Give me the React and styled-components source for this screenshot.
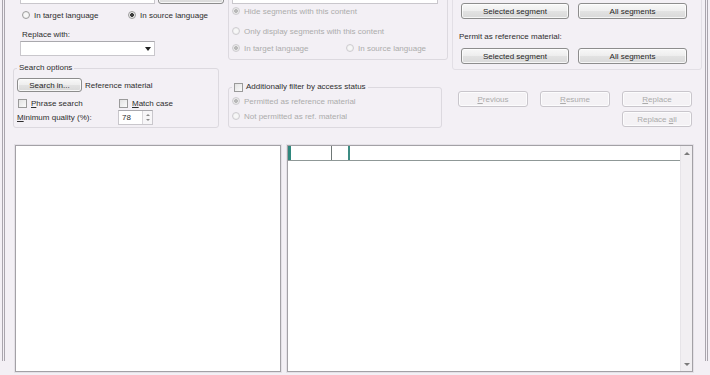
import React from 'react';
import styled, { createGlobalStyle } from 'styled-components';

const GlobalStyle = createGlobalStyle`
  html, body { margin: 0; padding: 0; background: #f3f0f5; }
  body {
    font-family: "Liberation Sans", Arial, sans-serif;
    font-size: 8px;
    color: #2e2e2e;
  }
  * { box-sizing: border-box; }
`;

const Window = styled.div`
  width: 710px;
  height: 375px;
  overflow: hidden;
  background: #f3f0f5;
  padding: 0 2px;
`;

const Inner = styled.div`
  height: 100%;
  border-left: 3px double #a9a5ad;
  border-right: 3px double #a9a5ad;
  padding: 0 3px 0 8px;
`;

const TopSection = styled.div`
  display: flex;
  align-items: flex-start;
  margin-top: -14px;
`;

const LeftCol = styled.div`
  width: 213px;
  padding-top: 2px;
  display: flex;
  flex-direction: column;
`;

const MidCol = styled.div`
  width: 220px;
  margin-left: 2px;
  display: flex;
  flex-direction: column;
`;

const RightCol = styled.div`
  width: 250px;
  margin-left: 4px;
  display: flex;
  flex-direction: column;
`;

const TopRow = styled.div`
  display: flex;
  gap: 3px;
  padding-left: 7px;
`;

const TextBox = styled.div`
  width: ${p => p.$w}px;
  height: ${p => p.$h || 16}px;
  background: #fff;
  border: 1px solid #c9c7cc;
  border-top-color: #a9a8ad;
`;

const Button = styled.button`
  width: ${p => p.$w}px;
  height: ${p => p.$h || 16}px;
  padding: 0;
  display: flex;
  align-items: center;
  justify-content: center;
  white-space: nowrap;
  font: inherit;
  font-size: 8px;
  border: 1px solid ${p => (p.disabled ? '#c9c6cc' : '#8d8d8d')};
  border-radius: 3px;
  background: ${p =>
    p.disabled
      ? '#f4f2f5'
      : 'linear-gradient(#f8f8f8, #eeeeee 48%, #e2e2e2 52%, #d9d9d9)'};
  color: ${p => (p.disabled ? '#ababab' : '#262626')};
  box-shadow: inset 0 0 0 1px rgba(255, 255, 255, 0.75);
`;

const Row = styled.div`
  display: flex;
  align-items: center;
  height: ${p => p.$h || 12}px;
  margin-top: ${p => p.$mt || 0}px;
  padding-left: ${p => p.$pl || 0}px;
  gap: ${p => p.$gap || 0}px;
`;

const Option = styled.label`
  display: inline-flex;
  align-items: center;
  gap: 4px;
  width: ${p => (p.$w ? `${p.$w}px` : 'auto')};
  flex: none;
  white-space: nowrap;
  color: ${p => (p.$disabled ? '#acacac' : '#2e2e2e')};
`;

const RadioDot = styled.span`
  width: 8px;
  height: 8px;
  flex: none;
  border-radius: 50%;
  border: 1px solid ${p => (p.$disabled ? '#cfcdd1' : '#9d9d9d')};
  background: ${p =>
    p.$checked
      ? `radial-gradient(circle, ${p.$disabled ? '#b9b9b9' : '#3c3c3c'} 0 1.6px, #ececec 2.2px, #dedede)`
      : 'radial-gradient(circle, #f7f7f7 0 1.5px, #e6e6e6)'};
`;

const CheckBox = styled.span`
  width: 9px;
  height: 9px;
  flex: none;
  border: 1px solid #9a9a9a;
  background: linear-gradient(135deg, #e2e2e2, #fbfbfb);
`;

const U = styled.span`
  text-decoration: underline;
`;

const FieldLabel = styled.div`
  height: 10px;
  line-height: 10px;
  width: ${p => (p.$w ? `${p.$w}px` : 'auto')};
  margin-top: ${p => p.$mt || 0}px;
  margin-left: ${p => p.$ml || 0}px;
  white-space: nowrap;
`;

const Combo = styled(TextBox)`
  margin-top: 1px;
  margin-left: 7px;
  display: flex;
  align-items: center;
  justify-content: flex-end;
  padding-right: 3px;
`;

const ComboArrow = styled.span`
  width: 0;
  height: 0;
  border-left: 3px solid transparent;
  border-right: 3px solid transparent;
  border-top: 4px solid #222;
`;

const GroupBox = styled.fieldset`
  margin: ${p => p.$mt || 0}px 0 0 0;
  min-width: 0;
  width: ${p => p.$w}px;
  border: 1px solid #dcd9df;
  border-radius: 3px;
  padding: ${p => p.$pt || 2}px 3px ${p => p.$pb || 2}px 3px;
`;

const Legend = styled.legend`
  padding: 0 2px;
  height: ${p => p.$h || 10}px;
  line-height: ${p => p.$h || 10}px;
  display: flex;
  align-items: center;
  gap: 3px;
  white-space: nowrap;
`;

const Spin = styled.div`
  width: 35px;
  height: 15px;
  background: #fff;
  border: 1px solid #c9c7cc;
  border-top-color: #a9a8ad;
  display: flex;
  align-items: stretch;
`;

const SpinValue = styled.span`
  flex: 1;
  display: flex;
  align-items: center;
  padding-left: 3px;
`;

const SpinButtons = styled.span`
  width: 10px;
  border-left: 1px solid #d8d6da;
  display: flex;
  flex-direction: column;
  align-items: center;
  justify-content: space-evenly;
  background: #f7f6f8;
`;

const TinyArrow = styled.span`
  width: 0;
  height: 0;
  border-left: 2px solid transparent;
  border-right: 2px solid transparent;
  ${p => (p.$up ? 'border-bottom: 2px solid #8a8a8a;' : 'border-top: 2px solid #8a8a8a;')}
`;

const MidGroup = styled.div`
  border: 1px solid #dcd9df;
  border-radius: 3px;
  padding: 1px 3px 5px 3px;
`;

const RightGroup = styled.div`
  border: 1px solid #e2dfe5;
  border-radius: 3px;
  padding: 16px 0 5px 8px;
`;

const ButtonRow = styled.div`
  display: flex;
  gap: 9px;
  margin-top: ${p => p.$mt || 0}px;
`;

const ActionGrid = styled.div`
  display: grid;
  grid-template-columns: repeat(3, 70px);
  column-gap: 12px;
  row-gap: 4px;
  margin: 21px 0 0 6px;
`;

const BottomSection = styled.div`
  display: flex;
  gap: 6px;
  margin-top: 17px;
  padding-left: 2px;
`;

const Panel = styled.div`
  width: ${p => p.$w}px;
  height: 227px;
  background: #fff;
  border: 1px solid #a3a1a6;
  box-shadow: 0 0 0 1px #e4e1e7;
  display: flex;
`;

const GridArea = styled.div`
  flex: 1;
  display: flex;
  flex-direction: column;
`;

const HeaderRow = styled.div`
  height: 15px;
  display: flex;
  border-bottom: 1px solid #8f9897;
`;

const HeaderCell = styled.div`
  width: ${p => p.$w}px;
  flex: ${p => (p.$w ? 'none' : '1')};
  border-left: ${p => p.$lead || 0}px solid #2f877d;
  border-right: ${p => p.$sep || 0}px solid ${p => p.$sepColor || '#6f7776'};
`;

const Scrollbar = styled.div`
  width: 12px;
  background: #f1eff2;
  border-left: 1px solid #e6e4e8;
  display: flex;
  flex-direction: column;
  align-items: center;
  justify-content: space-between;
  padding: 6px 0 5px;
`;

const ScrollArrow = styled.span`
  width: 0;
  height: 0;
  border-left: 3px solid transparent;
  border-right: 3px solid transparent;
  ${p => (p.$up ? 'border-bottom: 3px solid #7b7b7b;' : 'border-top: 3px solid #7b7b7b;')}
`;

function Radio({ checked, disabled, children, w }) {
  return (
    <Option $w={w} $disabled={disabled}>
      <RadioDot $checked={checked} $disabled={disabled} />
      <span>{children}</span>
    </Option>
  );
}

function Check({ children, w }) {
  return (
    <Option $w={w}>
      <CheckBox />
      <span>{children}</span>
    </Option>
  );
}

function Btn({ children, ...rest }) {
  return (
    <Button {...rest}>
      <span>{children}</span>
    </Button>
  );
}

export default function App() {
  return (
    <>
      <GlobalStyle />
      <Window>
        <Inner>
          <TopSection>
            <LeftCol>
              <TopRow>
                <TextBox $w={135} />
                <Button $w={66} />
              </TopRow>
              <Row $mt={5} $pl={9}>
                <Radio w={106}>In target language</Radio>
                <Radio checked>In source language</Radio>
              </Row>
              <FieldLabel $mt={9} $ml={9}>Replace with:</FieldLabel>
              <Combo $w={135} $h={15}>
                <ComboArrow />
              </Combo>
              <GroupBox $w={206} $mt={7} $pt={5} $pb={2}>
                <Legend>Search options</Legend>
                <Row $h={14} $gap={3}>
                  <Btn $w={65} $h={14}>Search in...</Btn>
                  <span>Reference material</span>
                </Row>
                <Row $h={10} $mt={6} $pl={1}>
                  <Check w={101}><U>P</U>hrase search</Check>
                  <Check><U>M</U>atch case</Check>
                </Row>
                <Row $h={15} $mt={2}>
                  <FieldLabel $w={101}>
                    <U>M</U>inimum quality (%):
                  </FieldLabel>
                  <Spin>
                    <SpinValue>78</SpinValue>
                    <SpinButtons>
                      <TinyArrow $up />
                      <TinyArrow />
                    </SpinButtons>
                  </Spin>
                </Row>
              </GroupBox>
            </LeftCol>

            <MidCol>
              <MidGroup>
                <TextBox $w={206} />
                <Row $mt={1}>
                  <Radio checked disabled>Hide segments with this content</Radio>
                </Row>
                <Row $mt={8}>
                  <Radio disabled>Only display segments with this content</Radio>
                </Row>
                <Row $mt={5}>
                  <Radio checked disabled w={114}>In target language</Radio>
                  <Radio disabled>In source language</Radio>
                </Row>
              </MidGroup>
              <GroupBox $w={214} $mt={21} $pt={2} $pb={5}>
                <Legend $h={12}>
                  <CheckBox />
                  <span>Additionally filter by access status</span>
                </Legend>
                <Row>
                  <Radio checked disabled>Permitted as reference material</Radio>
                </Row>
                <Row $mt={3}>
                  <Radio disabled>Not permitted as ref. material</Radio>
                </Row>
              </GroupBox>
            </MidCol>

            <RightCol>
              <RightGroup>
                <ButtonRow>
                  <Btn $w={108}>Selected segment</Btn>
                  <Btn $w={109}>All segments</Btn>
                </ButtonRow>
                <FieldLabel $mt={13} $ml={-2}>Permit as reference material:</FieldLabel>
                <ButtonRow $mt={6}>
                  <Btn $w={108}>Selected segment</Btn>
                  <Btn $w={109}>All segments</Btn>
                </ButtonRow>
              </RightGroup>
              <ActionGrid>
                <Btn disabled $w={70}><U>P</U>revious</Btn>
                <Btn disabled $w={70}><U>R</U>esume</Btn>
                <Btn disabled $w={70}><U>R</U>eplace</Btn>
                <span />
                <span />
                <Btn disabled $w={70}>Replace <U>a</U>ll</Btn>
              </ActionGrid>
            </RightCol>
          </TopSection>

          <BottomSection>
            <Panel $w={266} />
            <Panel $w={406}>
              <GridArea>
                <HeaderRow>
                  <HeaderCell $w={44} $lead={3} $sep={1} />
                  <HeaderCell $w={18} $sep={2} $sepColor="#3d8c83" />
                  <HeaderCell />
                </HeaderRow>
              </GridArea>
              <Scrollbar>
                <ScrollArrow $up />
                <ScrollArrow />
              </Scrollbar>
            </Panel>
          </BottomSection>
        </Inner>
      </Window>
    </>
  );
}
